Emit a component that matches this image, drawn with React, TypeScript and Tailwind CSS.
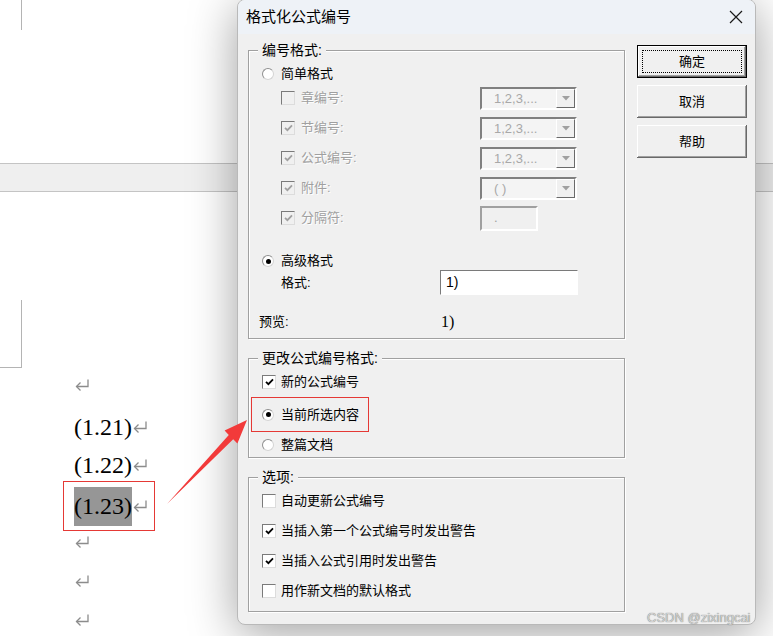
import React from 'react';

type Props = { checked?: boolean; disabled?: boolean };

function ReturnMark() {
  return (
    <svg width="16" height="14" viewBox="0 0 16 14" className="shrink-0">
      <path d="M14 1.5 V8.5 H2.5" fill="none" stroke="#8c8c8c" strokeWidth="1.3" />
      <path d="M6.5 4.5 L2.5 8.5 L6.5 12.5" fill="none" stroke="#8c8c8c" strokeWidth="1.3" />
    </svg>
  );
}

function CheckBox({ checked, disabled }: Props) {
  return (
    <div
      className={`flex h-[14px] w-[14px] shrink-0 items-center justify-center border border-t-[#7a7a7a] border-l-[#7a7a7a] border-r-[#dcdcdc] border-b-[#dcdcdc] ${
        disabled ? 'bg-[#f0f0f0]' : 'bg-white'
      }`}
    >
      {checked && (
        <svg width="9" height="8" viewBox="0 0 9 8">
          <path d="M1 3.8 L3.4 6.2 L8 1.4" fill="none" stroke={disabled ? '#a0a0a0' : '#000'} strokeWidth="1.8" />
        </svg>
      )}
    </div>
  );
}

function Radio({ checked }: Props) {
  return (
    <div className="flex h-[12px] w-[12px] shrink-0 items-center justify-center rounded-full border border-[#8f8f8f] border-r-[#d4d4d4] border-b-[#d4d4d4] bg-white">
      {checked && <div className="h-[5px] w-[5px] rounded-full bg-black" />}
    </div>
  );
}

function Combo({ value }: { value: string }) {
  return (
    <div className="flex h-[23px] w-[97px] items-center border-2 border-t-[#808080] border-l-[#808080] border-r-white border-b-white bg-[#f4f4f4]">
      <span className="flex-1 pl-[12px] text-[13px] leading-none text-[#a8a8a8]">{value}</span>
      <div className="flex h-[19px] w-[19px] items-center justify-center border border-t-white border-l-white border-r-[#6a6a6a] border-b-[#6a6a6a] bg-[#f0f0f0]">
        <svg width="8" height="5" viewBox="0 0 8 5">
          <path d="M0 0 H8 L4 4.5 Z" fill="#a0a0a0" />
        </svg>
      </div>
    </div>
  );
}

function Frame({ title, className, children }: { title: string; className: string; children: React.ReactNode }) {
  return (
    <div className={`relative w-[377px] border border-[#a0a0a0] shadow-[inset_1px_1px_0_#fff,1px_1px_0_#fff] ${className}`}>
      <span className="absolute -top-[10px] left-[9px] bg-[#f0f0f0] px-[4px] text-[14px] leading-[18px] text-black">{title}</span>
      {children}
    </div>
  );
}

function Btn({ label, primary }: { label: string; primary?: boolean }) {
  return (
    <div
      className={`flex h-[33px] w-[110px] items-center justify-center bg-[#f0f0f0] text-[13px] text-black shadow-[inset_-1px_-1px_0_#696969,inset_1px_1px_0_#fff,inset_-2px_-2px_0_#a0a0a0] ${
        primary ? 'border border-black p-[4px]' : ''
      }`}
    >
      {primary ? (
        <div className="flex h-full w-full items-center justify-center border border-dotted border-black">{label}</div>
      ) : (
        label
      )}
    </div>
  );
}

const numberRows = [
  { label: '章编号:', checked: false, value: '1,2,3,...' },
  { label: '节编号:', checked: true, value: '1,2,3,...' },
  { label: '公式编号:', checked: true, value: '1,2,3,...' },
  { label: '附件:', checked: true, value: '( )' },
];

const options = [
  { label: '自动更新公式编号', checked: false },
  { label: '当插入第一个公式编号时发出警告', checked: true },
  { label: '当插入公式引用时发出警告', checked: true },
  { label: '用作新文档的默认格式', checked: false },
];

export default function App() {
  return (
    <div className="relative h-[636px] w-[773px] overflow-hidden bg-white font-['Liberation_Sans','Noto_Sans_CJK_SC',sans-serif]">
      {/* Word document behind the dialog */}
      <div className="h-[163px]">
        <div className="ml-[21px] h-[30px] w-px bg-[#b4b4b4]" />
      </div>
      <div className="h-[29px] border-y border-[#c4c4c4] bg-[#efefef]" />
      <div className="flex">
        <div className="mt-[108px] h-[68px] w-[22px] border-r border-b border-[#b4b4b4]" />
        <div className="ml-[52px] flex flex-col items-start pt-[184px] font-['Liberation_Serif',serif] text-[24px] text-black">
          <div className="flex h-[18px] items-center"><ReturnMark /></div>
          <div className="mt-[14px] flex h-[38px] items-center">(1.21)<ReturnMark /></div>
          <div className="flex h-[38px] items-center">(1.22)<ReturnMark /></div>
          <div className="-mt-[3px] -ml-[11px] flex h-[50px] w-[92px] items-center border border-[#e53935] pl-[10px]">
            <span className="h-[39px] bg-[#969696] leading-[39px]">(1.23)</span>
            <ReturnMark />
          </div>
          <div className="mt-[2px] flex h-[18px] items-center"><ReturnMark /></div>
          <div className="mt-[21px] flex h-[18px] items-center"><ReturnMark /></div>
          <div className="mt-[21px] flex h-[18px] items-center"><ReturnMark /></div>
        </div>
      </div>

      {/* Dialog window */}
      <div className="absolute left-[237px] top-[-1px] h-[626px] w-[519px] overflow-hidden rounded-[8px] border border-[#b9b9b9] bg-[#f0f0f0] shadow-[0_8px_48px_rgba(0,0,0,0.38)]">
        <div className="flex h-[34px] items-center justify-between bg-[#eef2f7] pl-[8px] pr-[12px]">
          <span className="text-[15px] text-black">格式化公式编号</span>
          <svg width="14" height="14" viewBox="0 0 14 14">
            <path d="M1 1 L13 13 M13 1 L1 13" stroke="#1a1a1a" strokeWidth="1.2" />
          </svg>
        </div>

        <div className="flex items-start pl-[10px]">
          <div className="mt-[16px] flex flex-col text-[13px] text-black">
            <Frame title="编号格式:" className="h-[289px]">
              <div className="ml-[13px] mt-[14px] flex h-[18px] items-center gap-[7px]">
                <Radio />
                <span>简单格式</span>
              </div>
              {numberRows.map((r) => (
                <div key={r.label} className="ml-[32px] flex h-[30px] items-center">
                  <div className="flex w-[199px] items-center gap-[6px]">
                    <CheckBox checked={r.checked} disabled />
                    <span className="text-[#a0a0a0] [text-shadow:1px_1px_0_#fff]">{r.label}</span>
                  </div>
                  <Combo value={r.value} />
                </div>
              ))}
              <div className="ml-[32px] flex h-[30px] items-center">
                <div className="flex w-[199px] items-center gap-[6px]">
                  <CheckBox checked disabled />
                  <span className="text-[#a0a0a0] [text-shadow:1px_1px_0_#fff]">分隔符:</span>
                </div>
                <div className="flex h-[25px] w-[58px] items-center border-2 border-t-[#a0a0a0] border-l-[#a0a0a0] border-r-white border-b-white pl-[12px] text-[#a0a0a0]">.</div>
              </div>
              <div className="ml-[13px] mt-[19px] flex h-[18px] items-center gap-[7px]">
                <Radio checked />
                <span>高级格式</span>
              </div>
              <div className="ml-[32px] flex h-[25px] items-center">
                <span className="w-[159px]">格式:</span>
                <div className="flex h-[25px] w-[138px] items-center border border-t-[#7a7a7a] border-l-[#7a7a7a] border-r-white border-b-white bg-white pl-[5px] text-[14px]">1)</div>
              </div>
              <div className="ml-[10px] mt-[17px] flex h-[20px] items-center">
                <span className="w-[182px]">预览:</span>
                <span className="font-['Liberation_Serif',serif] text-[16px]">1)</span>
              </div>
            </Frame>

            <Frame title="更改公式编号格式:" className="mt-[19px] h-[100px]">
              <div className="ml-[13px] mt-[14px] flex h-[18px] items-center gap-[5px]">
                <CheckBox checked />
                <span>新的公式编号</span>
              </div>
              <div className="ml-[2px] mt-[6px] flex h-[35px] w-[118px] items-center gap-[7px] border border-[#e53935] pl-[10px]">
                <Radio checked />
                <span>当前所选内容</span>
              </div>
              <div className="ml-[13px] mt-[4px] flex h-[18px] items-center gap-[7px]">
                <Radio />
                <span>整篇文档</span>
              </div>
            </Frame>

            <Frame title="选项:" className="mt-[19px] h-[135px] pt-[8px]">
              {options.map((o) => (
                <div key={o.label} className="ml-[13px] flex h-[30px] items-center gap-[5px]">
                  <CheckBox checked={o.checked} />
                  <span>{o.label}</span>
                </div>
              ))}
            </Frame>
          </div>

          <div className="ml-[12px] mt-[11px] flex flex-col gap-[7px]">
            <Btn label="确定" primary />
            <Btn label="取消" />
            <Btn label="帮助" />
          </div>
        </div>
      </div>

      {/* annotation arrow */}
      <svg className="pointer-events-none absolute left-0 top-0" width="773" height="636" viewBox="0 0 773 636">
        <polygon points="167,504 233.2,439.2 237.4,443.6 247,420 224.6,430.6 228.8,435" fill="#f23a3a" />
      </svg>

      <span className="absolute left-[647px] top-[611px] text-[13px] leading-none text-[#d2d2d2] [text-shadow:0_0_1px_#555]">
        CSDN @zixingcai
      </span>
    </div>
  );
}
